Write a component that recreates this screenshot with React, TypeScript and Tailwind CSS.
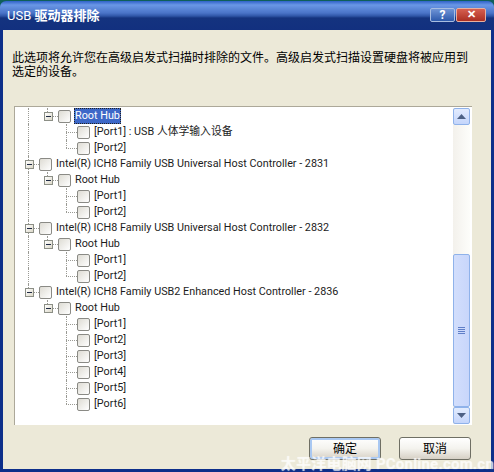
import React from "react";

type RowDef = { level: 0 | 1 | 2; text: string; guides: number[]; elbow?: "mid" | "last"; selected?: boolean; expander?: boolean };

const ports = (n: number, guide0: boolean, label?: string): RowDef[] =>
  Array.from({ length: n }, (_, i) => ({
    level: 2 as const,
    text: i === 0 && label ? label : `[Port${i + 1}]`,
    guides: guide0 ? [28] : [],
    elbow: (i === n - 1 ? "last" : "mid") as "last" | "mid",
  }));

const controller = (name: string, last: boolean, n: number): RowDef[] => [
  { level: 0, text: name, guides: [], expander: true },
  { level: 1, text: "Root Hub", guides: last ? [] : [28], expander: true },
  ...ports(n, !last),
];

const rows: RowDef[] = [
  { level: 1, text: "Root Hub", guides: [28], expander: true, selected: true },
  ...ports(2, true, "[Port1] : USB 人体学输入设备"),
  ...controller("Intel(R) ICH8 Family USB Universal Host Controller - 2831", false, 2),
  ...controller("Intel(R) ICH8 Family USB Universal Host Controller - 2832", false, 2),
  ...controller("Intel(R) ICH8 Family USB2 Enhanced Host Controller - 2836", true, 6),
];

function Expander() {
  return (
    <span className="w-[9px] h-[9px] shrink-0 border border-[#8c8f86] bg-gradient-to-br from-white to-[#dcd8c8] flex items-center justify-center">
      <span className="w-[5px] h-px bg-[#1f2a44]" />
    </span>
  );
}

function Check() {
  return <span className="block w-[13px] h-[13px] shrink-0 rounded-[2px] border border-[#8a8a85] bg-gradient-to-br from-[#dedcd4] to-[#ffffff]" />;
}

function Row({ r, last0 }: { r: RowDef; last0: boolean }) {
  const left = [11, 30, 49][r.level];
  return (
    <div className="relative h-4 flex items-center">
      {r.guides.map((g) => (
        <span key={g} className="absolute top-0 bottom-0 w-0 border-l border-dotted border-[#9a9a94]" style={{ left: g - 15 }} />
      ))}
      {r.level === 0 && (
        <>
          <span className={`absolute left-[13px] w-0 border-l border-dotted border-[#9a9a94] ${last0 ? "top-0 h-2" : "top-0 bottom-0"}`} />
          <span className="absolute left-[13px] top-2 w-[11px] border-t border-dotted border-[#9a9a94]" />
        </>
      )}
      {r.level === 1 && (
        <>
          <span className="absolute left-[32px] top-0 h-2 w-0 border-l border-dotted border-[#9a9a94]" />
          <span className="absolute left-[32px] top-2 w-[11px] border-t border-dotted border-[#9a9a94]" />
        </>
      )}
      {r.level === 2 && (
        <>
          <span className={`absolute left-[51px] top-0 w-0 border-l border-dotted border-[#9a9a94] ${r.elbow === "last" ? "h-2" : "bottom-0"}`} />
          <span className="absolute left-[51px] top-2 w-[11px] border-t border-dotted border-[#9a9a94]" />
        </>
      )}
      <span className="flex items-center relative" style={{ marginLeft: r.expander ? left - 1 : 62 }}>
        {r.expander && <Expander />}
        <span className={r.expander ? "ml-[5px]" : ""}>
          <Check />
        </span>
        <span
          className={`ml-[3px] px-[1px] h-4 leading-[15px] text-[10.8px] whitespace-pre ${
            r.selected ? "bg-[#3d68c8] text-white outline outline-1 outline-dotted outline-[#222] -outline-offset-1" : "text-[#1c1c1c]"
          }`}
        >
          {r.text}
        </span>
      </span>
    </div>
  );
}

function ArrowBtn({ up }: { up?: boolean }) {
  return (
    <div className="h-[17px] shrink-0 rounded-[2px] border border-[#8fb2ea] bg-gradient-to-b from-[#e3ecfe] to-[#c4d5fb] flex items-center justify-center">
      <svg width="9" height="5" viewBox="0 0 9 5">
        <path d={up ? "M4.5 0L9 5H0Z" : "M0 0H9L4.5 5Z"} fill="#4d6185" />
      </svg>
    </div>
  );
}

function DlgButton({ children, primary }: { children: React.ReactNode; primary?: boolean }) {
  return (
    <div
      className={`w-[72px] h-[23px] rounded-[3px] border border-[#6f6f64] flex items-center justify-center text-[12px] text-black bg-gradient-to-b from-[#ffffff] via-[#f4f3ee] to-[#d6d0c5] ${
        primary ? "shadow-[inset_0_0_0_2px_#a9c8f2]" : ""
      }`}
    >
      {children}
    </div>
  );
}

export default function App() {
  return (
    <div
      className="relative w-[494px] h-[472px] flex flex-col overflow-hidden bg-[#0f5f5a]"
      style={{ fontFamily: 'Roboto,"Noto Sans CJK SC",sans-serif' }}
    >
      <div className="h-[29px] shrink-0 mt-[1px] rounded-t-[6px] bg-[linear-gradient(to_bottom,#2f62c8_0px,#6a97e6_4px,#4a74c8_12px,#2f56a8_15px,#14337f_17px,#12307f_100%)] flex items-center pl-[7px] pr-[8px] justify-between">
        <span className="text-white text-[13px] leading-none">
          USB <span className="font-bold">驱动器排除</span>
        </span>
        <div className="flex gap-[1px] -mt-[1px]">
          <span className="w-[25px] h-[14px] rounded-[2px] border border-[#a8bde0] bg-gradient-to-b from-[#6f94d6] to-[#2d59ab] text-white text-[12px] font-bold leading-[12px] text-center">?</span>
          <span className="w-[30px] h-[14px] rounded-[2px] border border-[#e8b0a0] bg-gradient-to-b from-[#d65f50] to-[#ab2e22] text-white text-[11px] font-bold leading-[12px] text-center">✕</span>
        </div>
      </div>
      <div className="flex-1 flex flex-col min-h-0 bg-[#ece9d8] border-x-[3px] border-b-[3px] border-[#0d2f8a] pl-[9px] pr-[19px]">
        <p className="mt-[21px] h-[40px] text-[12px] leading-[14px] text-black m-0 whitespace-pre-line">
          {"此选项将允许您在高级启发式扫描时排除的文件。高级启发式扫描设置硬盘将被应用到\n选定的设备。"}
        </p>
        <div className="mt-[15px] ml-[2px] h-[319px] flex bg-white border-l border-t border-[#aca899] py-[1px]">
          <div className="flex-1 min-w-0 overflow-hidden">
            {rows.map((r, i) => (
              <Row key={i} r={r} last0={r.level === 0 && i === rows.length - 8} />
            ))}
          </div>
          <div className="w-[17px] mr-[2px] shrink-0 flex flex-col bg-gradient-to-r from-[#f3f1ec] to-[#fdfdfa]">
            <ArrowBtn up />
            <div className="flex-1" />
            <div className="h-[153px] shrink-0 rounded-[2px] border border-[#8fb2ea] bg-gradient-to-r from-[#d2defc] to-[#c8d6fb] flex flex-col items-center justify-center gap-[1px] pb-[1px]">
              {[0, 1, 2, 3].map((i) => (
                <span key={i} className="w-[7px] h-px bg-[#5f7fc8]" />
              ))}
            </div>
            <ArrowBtn />
          </div>
        </div>
        <div className="flex justify-end gap-[18px] mt-[12px] pr-[1px]">
          <DlgButton primary>确定</DlgButton>
          <DlgButton>取消</DlgButton>
        </div>
      </div>
      <span className="absolute right-0 bottom-[2px] text-[15px] leading-[11px] font-bold text-white/45 whitespace-pre tracking-[0.2px] [text-shadow:0_0_1px_#ffffffaa]">太平洋电脑网 PConline.com.cn</span>
    </div>
  );
}
